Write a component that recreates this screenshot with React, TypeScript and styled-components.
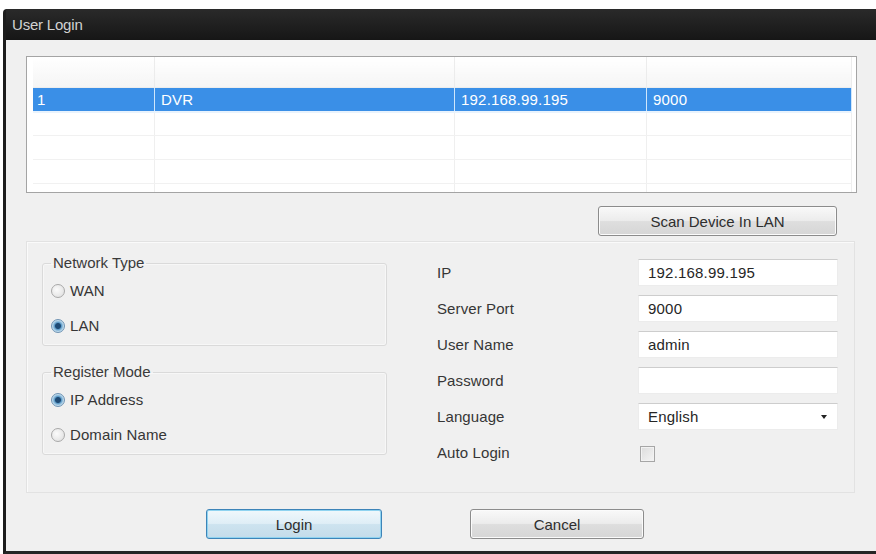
import styled, { createGlobalStyle } from 'styled-components'

const GlobalStyle = createGlobalStyle`
  html, body {
    margin: 0;
    padding: 0;
    background: #fff;
  }
  body {
    font-family: "Liberation Sans", Arial, sans-serif;
  }
`

const Screen = styled.div`
  width: 876px;
  height: 554px;
  padding: 9px 0 0 3px;
  box-sizing: border-box;
  overflow: hidden;
  background: #fff;
`

const Window = styled.div`
  display: flex;
  flex-direction: column;
  height: 545px;
  box-sizing: border-box;
  border-left: 3px solid #1d1d1d;
  border-bottom: 3px solid #262626;
  border-top-left-radius: 4px;
  background: #f0f0f0;
`

const TitleBar = styled.div`
  height: 31px;
  flex-shrink: 0;
  display: flex;
  align-items: center;
  padding-left: 6px;
  background: linear-gradient(#2a2a2a, #161616);
  color: #d2d2d2;
  font-size: 15px;
  letter-spacing: -0.2px;
`

const Body = styled.div`
  display: flex;
  flex-direction: column;
  padding: 16px 19px 0 20px;
`

const TableBox = styled.div`
  height: 137px;
  box-sizing: border-box;
  border: 1px solid #a4a4a4;
  padding: 0 6px;
  background: #fff;
  overflow: hidden;
`

const Grid = styled.table`
  width: 815px;
  border-collapse: collapse;
  table-layout: fixed;
  font-size: 15px;
  letter-spacing: 0.2px;
`

const HeadCell = styled.th<{ $w: number }>`
  width: ${p => p.$w}px;
  height: 30px;
  padding: 0;
  background: linear-gradient(#ffffff, #f5f5f5);
  border-right: 1px solid #ececec;
  border-bottom: 1px solid #ededed;
`

const Row = styled.tr<{ $selected?: boolean }>`
  height: 24px;

  td {
    padding: 0 0 0 6px;
    color: ${p => (p.$selected ? '#fff' : '#333')};
    background: ${p => (p.$selected ? '#3a8fe7' : '#fff')};
    border-right: 1px solid ${p => (p.$selected ? '#cfe6fb' : '#efefef')};
    border-bottom: ${p => (p.$selected ? '2px solid #e9f3fd' : '1px solid #f1f1f1')};
    white-space: nowrap;
  }

  td:first-child {
    padding-left: 4px;
  }
`

const ScanRow = styled.div`
  display: flex;
  justify-content: flex-end;
  padding-right: 20px;
  margin-top: 13px;
`

const Button = styled.button<{ $w: number; $focus?: boolean }>`
  width: ${p => p.$w}px;
  height: 30px;
  padding: 0;
  font-family: "Liberation Sans", Arial, sans-serif;
  font-size: 15px;
  color: #2e2e2e;
  border-radius: 3px;
  border: 1px solid ${p => (p.$focus ? '#3d84b8' : '#8c8c8c')};
  background: ${p =>
    p.$focus
      ? 'linear-gradient(#f0f8fc, #dfeef6 48%, #cde3ef 52%, #c4dcea)'
      : 'linear-gradient(#f9f9f9, #ececec 48%, #dedede 52%, #d6d6d6)'};
  box-shadow: ${p => (p.$focus ? 'inset 0 0 0 1px #8fd3f0' : 'inset 0 0 0 1px #fbfbfb')};
`

const Panel = styled.div`
  margin-top: 5px;
  width: 829px;
  height: 252px;
  box-sizing: border-box;
  border: 1px solid #e2e2e2;
  box-shadow: inset 1px 1px 0 #fafafa;
  display: grid;
  grid-template-columns: 345px 401px;
  column-gap: 50px;
  padding: 13px 0 0 15px;
`

const LeftCol = styled.div`
  display: flex;
  flex-direction: column;
  gap: 18px;
`

const Group = styled.fieldset`
  margin: 0;
  padding: 2px 8px 2px;
  min-width: 0;
  border: 1px solid #dadada;
  border-radius: 3px;
  box-shadow: inset 0 0 0 1px #f7f7f7;
`

const Legend = styled.legend`
  padding: 0 2px;
  font-size: 15px;
  line-height: 16px;
  color: #3a3a3a;
`

const Option = styled.label`
  display: flex;
  align-items: center;
  gap: 5px;
  height: 35px;
  font-size: 15px;
  color: #363636;
  letter-spacing: 0.1px;
`

const Radio = styled.span<{ $checked?: boolean }>`
  width: 14px;
  height: 14px;
  border-radius: 50%;
  box-sizing: border-box;
  border: 1px solid ${p => (p.$checked ? '#6f93b3' : '#a9a9a9')};
  background: ${p =>
    p.$checked
      ? 'radial-gradient(circle, #1e4a74 0 2.5px, #5d9bc8 3.5px, #bcd9ec 5.5px)'
      : 'radial-gradient(circle at 40% 40%, #fbfbfb, #dcdcdc)'};
`

const Form = styled.div`
  display: grid;
  grid-template-columns: 201px 200px;
  grid-auto-rows: 27px;
  row-gap: 9px;
  padding-top: 4px;
  align-items: center;
`

const Label = styled.span`
  font-size: 15px;
  color: #363636;
  letter-spacing: 0.1px;
`

const Field = styled.div`
  height: 27px;
  box-sizing: border-box;
  display: flex;
  align-items: center;
  justify-content: space-between;
  padding: 0 10px 0 9px;
  background: #fff;
  border: 1px solid #ececec;
  border-top-color: #cdcdcd;
  font-size: 15px;
  color: #262626;
  letter-spacing: 0.2px;
`

const Caret = styled.span`
  width: 0;
  height: 0;
  border-left: 3.5px solid transparent;
  border-right: 3.5px solid transparent;
  border-top: 4px solid #222;
`

const Check = styled.span`
  width: 15px;
  height: 16px;
  margin: 3px 0 0 2px;
  box-sizing: border-box;
  border: 1px solid #a6a6a6;
  background: linear-gradient(135deg, #dcdcdc, #f4f4f4);
  box-shadow: inset 0 0 0 1px #f2f2f2;
`

const Footer = styled.div`
  display: flex;
  gap: 88px;
  padding: 16px 0 0 200px;
`

const columns = [121, 299, 191, 204]

const rows = [
  { id: '1', name: 'DVR', ip: '192.168.99.195', port: '9000', selected: true },
  { id: '', name: '', ip: '', port: '' },
  { id: '', name: '', ip: '', port: '' },
  { id: '', name: '', ip: '', port: '' },
  { id: '', name: '', ip: '', port: '' },
]

const App = () => (
  <Screen>
    <GlobalStyle />
    <Window>
      <TitleBar>User Login</TitleBar>
      <Body>
        <TableBox>
          <Grid>
            <thead>
              <tr>
                {columns.map((w, i) => (
                  <HeadCell key={i} $w={w} />
                ))}
              </tr>
            </thead>
            <tbody>
              {rows.map((r, i) => (
                <Row key={i} $selected={r.selected}>
                  <td>{r.id}</td>
                  <td>{r.name}</td>
                  <td>{r.ip}</td>
                  <td>{r.port}</td>
                </Row>
              ))}
            </tbody>
          </Grid>
        </TableBox>

        <ScanRow>
          <Button $w={239}>Scan Device In LAN</Button>
        </ScanRow>

        <Panel>
          <LeftCol>
            <Group>
              <Legend>Network Type</Legend>
              <Option>
                <Radio /> WAN
              </Option>
              <Option>
                <Radio $checked /> LAN
              </Option>
            </Group>
            <Group>
              <Legend>Register Mode</Legend>
              <Option>
                <Radio $checked /> IP Address
              </Option>
              <Option>
                <Radio /> Domain Name
              </Option>
            </Group>
          </LeftCol>

          <Form>
            <Label>IP</Label>
            <Field>192.168.99.195</Field>
            <Label>Server Port</Label>
            <Field>9000</Field>
            <Label>User Name</Label>
            <Field>admin</Field>
            <Label>Password</Label>
            <Field />
            <Label>Language</Label>
            <Field>
              English <Caret />
            </Field>
            <Label>Auto Login</Label>
            <Check />
          </Form>
        </Panel>
      </Body>

      <Footer>
        <Button $w={176} $focus>
          Login
        </Button>
        <Button $w={174}>Cancel</Button>
      </Footer>
    </Window>
  </Screen>
)

export default App
